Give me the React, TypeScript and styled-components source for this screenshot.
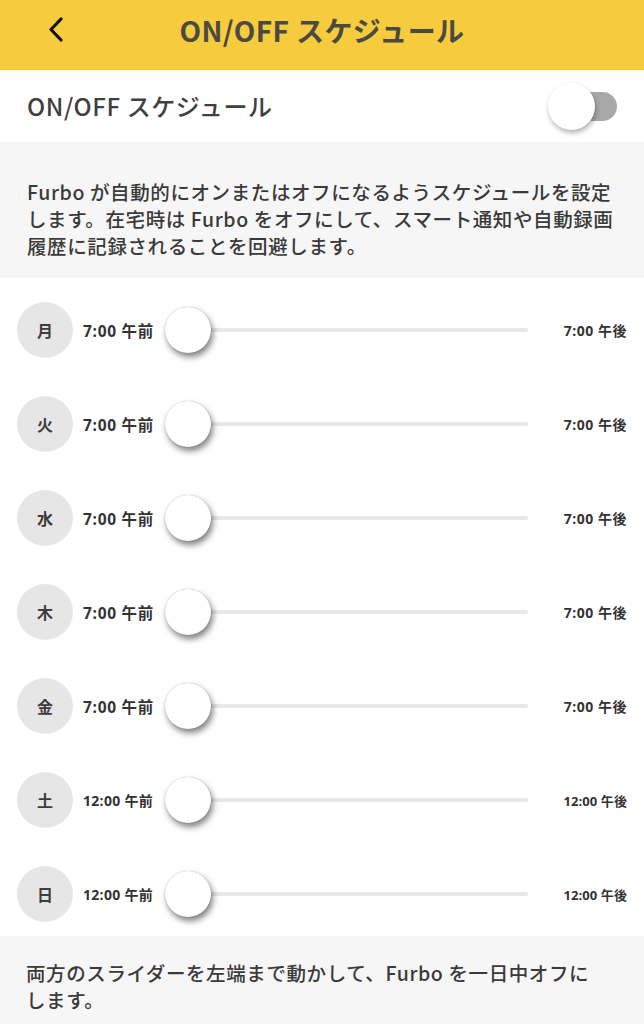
import styled, { createGlobalStyle } from 'styled-components';

const GlobalStyle = createGlobalStyle`
    html, body {
        margin: 0;
        padding: 0;
        background: #ffffff;
    }
    body {
        font-family: 'Noto Sans CJK JP', 'Noto Sans', sans-serif;
        color: #3d3d3d;
    }
`;

type Day = { name: string; start: string; end: string; small?: boolean };

const days: Day[] = [
    { name: '月', start: '7:00 午前', end: '7:00 午後' },
    { name: '火', start: '7:00 午前', end: '7:00 午後' },
    { name: '水', start: '7:00 午前', end: '7:00 午後' },
    { name: '木', start: '7:00 午前', end: '7:00 午後' },
    { name: '金', start: '7:00 午前', end: '7:00 午後' },
    { name: '土', start: '12:00 午前', end: '12:00 午後', small: true },
    { name: '日', start: '12:00 午前', end: '12:00 午後', small: true },
];

const App = () => {
    return (
        <Page>
            <GlobalStyle />
            <Header>
                <BackButton aria-label='戻る'>
                    <svg width='20' height='26' viewBox='0 0 20 26'>
                        <path
                            d='M15 2 L5 12.5 L15 23'
                            fill='none'
                            stroke='#111'
                            strokeWidth='3.2'
                            strokeLinecap='round'
                            strokeLinejoin='round'
                        />
                    </svg>
                </BackButton>
                <Title>ON/OFF スケジュール</Title>
            </Header>

            <ToggleRow>
                <ToggleLabel>ON/OFF スケジュール</ToggleLabel>
                <Switch>
                    <SwitchKnob />
                </Switch>
            </ToggleRow>

            <Note $top>
                Furbo が自動的にオンまたはオフになるようスケジュールを設定
                <br />
                します。在宅時は Furbo をオフにして、スマート通知や自動録画
                <br />
                履歴に記録されることを回避します。
            </Note>

            <DayList>
                {days.map((d) => (
                    <DayRow key={d.name}>
                        <DayBadge>{d.name}</DayBadge>
                        <StartLabel $small={d.small}>{d.start}</StartLabel>
                        <Slider>
                            <Knob />
                            <Track />
                        </Slider>
                        <EndLabel $small={d.small}>{d.end}</EndLabel>
                    </DayRow>
                ))}
            </DayList>

            <Note>
                両方のスライダーを左端まで動かして、Furbo を一日中オフに
                <br />
                します。
            </Note>
        </Page>
    );
};

export default App;

const Page = styled.div`
    width: 644px;
    height: 1024px;
    overflow: hidden;
    display: flex;
    flex-direction: column;
    background: #ffffff;
`;

const Header = styled.header`
    position: relative;
    height: 70px;
    flex-shrink: 0;
    background: #f6cb3d;
    display: flex;
    align-items: center;
    justify-content: center;
`;

const BackButton = styled.button`
    position: absolute;
    left: 44px;
    top: 16px;
    width: 24px;
    height: 28px;
    padding: 0;
    border: none;
    background: transparent;
    display: flex;
    align-items: center;
    justify-content: center;
`;

const Title = styled.h1`
    margin: 0 0 10px;
    font-size: 28px;
    font-weight: 700;
    color: #4a4a42;
    letter-spacing: 0.4px;
`;

const ToggleRow = styled.div`
    height: 72px;
    flex-shrink: 0;
    display: flex;
    align-items: center;
    justify-content: space-between;
    padding: 0 27px 0 27px;
    box-sizing: border-box;
`;

const ToggleLabel = styled.span`
    font-size: 24px;
    font-weight: 500;
    color: #404040;
    letter-spacing: 0.6px;
    margin-bottom: 2px;
`;

const Switch = styled.div`
    position: relative;
    width: 58px;
    height: 29px;
    border-radius: 15px;
    background: #a8a8a8;
`;

const SwitchKnob = styled.div`
    position: absolute;
    left: -11px;
    top: -9px;
    width: 47px;
    height: 47px;
    border-radius: 50%;
    background: #ffffff;
    box-shadow: 1px 3px 5px rgba(0, 0, 0, 0.3);
`;

const Note = styled.p<{ $top?: boolean }>`
    margin: 0;
    flex-shrink: 0;
    background: #f6f6f6;
    padding: ${(p) => (p.$top ? '36px 10px 0 27px' : '23px 10px 0 26px')};
    height: ${(p) => (p.$top ? '136px' : 'auto')};
    box-sizing: border-box;
    font-size: 19.5px;
    line-height: 27px;
    font-weight: 500;
    letter-spacing: 0.6px;
    color: #3a3a3a;
    white-space: nowrap;
    flex-grow: ${(p) => (p.$top ? 0 : 1)};
`;

const DayList = styled.div`
    height: 658px;
    flex-shrink: 0;
    padding-top: 5px;
    box-sizing: border-box;
    overflow: hidden;
`;

const DayRow = styled.div`
    height: 94px;
    display: flex;
    align-items: center;
    padding: 0 17px 0 17px;
`;

const DayBadge = styled.div`
    width: 56px;
    height: 56px;
    flex-shrink: 0;
    border-radius: 50%;
    background: #e6e6e6;
    display: flex;
    align-items: center;
    justify-content: center;
    font-size: 16px;
    font-weight: 700;
    color: #3d3d3d;
`;

const StartLabel = styled.span<{ $small?: boolean }>`
    width: 82px;
    flex-shrink: 0;
    margin-left: 10px;
    font-family: 'Open Sans', 'Noto Sans CJK JP', sans-serif;
    font-size: ${(p) => (p.$small ? '14px' : '15.5px')};
    font-weight: 700;
    letter-spacing: ${(p) => (p.$small ? '0.3px' : '0.7px')};
    color: #333333;
    white-space: nowrap;
`;

const EndLabel = styled.span<{ $small?: boolean }>`
    width: 66px;
    flex-shrink: 0;
    text-align: right;
    font-family: 'Open Sans', 'Noto Sans CJK JP', sans-serif;
    font-size: ${(p) => (p.$small ? '13px' : '14px')};
    font-weight: 700;
    letter-spacing: ${(p) => (p.$small ? '0.1px' : '0.5px')};
    color: #333333;
    white-space: nowrap;
`;

const Slider = styled.div`
    position: relative;
    flex: 1;
    height: 46px;
    display: flex;
    align-items: center;
    margin-right: 33px;
`;

const Track = styled.div`
    flex: 1;
    height: 4px;
    background: #e8e8e8;
    border-radius: 2px;
`;

const Knob = styled.div`
    position: absolute;
    left: 0;
    top: 0;
    width: 46px;
    height: 46px;
    border-radius: 50%;
    background: #ffffff;
    box-shadow: 2px 4px 6px rgba(0, 0, 0, 0.5), 0 0 1px rgba(0, 0, 0, 0.3);
    z-index: 1;
`;
